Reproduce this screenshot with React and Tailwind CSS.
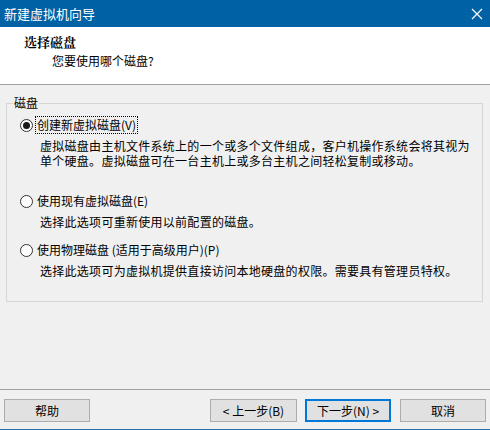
import { useState } from 'react'

const font = { fontFamily: '"Microsoft YaHei", "Noto Sans CJK SC", "Noto Sans", sans-serif' }

function Radio({ checked, onClick, label, focused, desc }) {
  return (
    <div className="flex flex-col">
      <button type="button" onClick={onClick} className="flex items-center h-[18px] text-left">
        <span className="w-[13px] h-[13px] rounded-full border border-[#333] bg-white flex items-center justify-center shrink-0">
          {checked && <span className="w-[7px] h-[7px] rounded-full bg-[#1a1a1a]" />}
        </span>
        <span className={'ml-[3px] leading-[16px] px-[1px] ' + (focused ? 'outline outline-1 outline-dotted outline-black' : '')}>
          {label}
        </span>
      </button>
      <div className="pl-[20px] mt-[4px] leading-[15px] text-[12px] tracking-[0.28px]">{desc}</div>
    </div>
  )
}

export default function App() {
  const [choice, setChoice] = useState(0)

  return (
    <div className="w-[490px] h-[430px] flex flex-col bg-[#f0f0f0] text-[12px] text-black overflow-hidden" style={font}>
      <div className="h-[27px] bg-[#0061a5] flex items-center justify-between pl-[4px] pr-[6px] text-white">
        <span className="text-[13px]">新建虚拟机向导</span>
        <svg width="12" height="12" viewBox="0 0 12 12" className="mr-[1px]">
          <path d="M1 1 L11 11 M11 1 L1 11" stroke="white" strokeWidth="1.2" />
        </svg>
      </div>

      <div className="h-[58px] bg-white border-b border-[#a0a0a0] flex flex-col pl-[24px] pt-[7px]">
        <div className="font-bold text-[13px] leading-[16px]" style={{ fontFamily: '"Noto Serif CJK SC", "Noto Sans CJK SC", serif' }}>选择磁盘</div>
        <div className="pl-[28px] mt-[3px] leading-[16px]">您要使用哪个磁盘?</div>
      </div>

      <div className="flex-1 px-[6px] pt-[18px]">
        <div className="relative border border-[#d5d5d5] h-[199px] mr-[1px]">
          <span className="absolute left-[6px] -top-[9px] bg-[#f0f0f0] px-[1px] leading-[16px]">磁盘</span>
          <div className="flex flex-col pl-[13px] pt-[12px]">
            <Radio
              checked={choice === 0}
              focused={choice === 0}
              onClick={() => setChoice(0)}
              label="创建新虚拟磁盘(V)"
              desc={<>虚拟磁盘由主机文件系统上的一个或多个文件组成，客户机操作系统会将其视为<br />单个硬盘。虚拟磁盘可在一台主机上或多台主机之间轻松复制或移动。</>}
            />
            <div className="mt-[24px]">
              <Radio
                checked={choice === 1}
                focused={choice === 1}
                onClick={() => setChoice(1)}
                label="使用现有虚拟磁盘(E)"
                desc="选择此选项可重新使用以前配置的磁盘。"
              />
            </div>
            <div className="mt-[12px]">
              <Radio
                checked={choice === 2}
                focused={choice === 2}
                onClick={() => setChoice(2)}
                label="使用物理磁盘 (适用于高级用户)(P)"
                desc="选择此选项可为虚拟机提供直接访问本地硬盘的权限。需要具有管理员特权。"
              />
            </div>
          </div>
        </div>
      </div>

      <div className="h-[41px] border-t border-[#a0a0a0] border-b border-b-[#2b6ea6] flex items-start pt-[9px] px-[4px]">
        <button className="w-[86px] h-[23px] bg-[#e1e1e1] border border-[#adadad]">帮助</button>
        <div className="flex-1" />
        <button className="w-[87px] h-[23px] bg-[#e1e1e1] border border-[#adadad]">&lt; 上一步(B)</button>
        <button className="ml-[8px] w-[86px] h-[23px] bg-[#e1e1e1] border-2 border-[#0078d7]">下一步(N) &gt;</button>
        <button className="ml-[9px] w-[86px] h-[23px] bg-[#e1e1e1] border border-[#adadad]">取消</button>
      </div>
    </div>
  )
}
